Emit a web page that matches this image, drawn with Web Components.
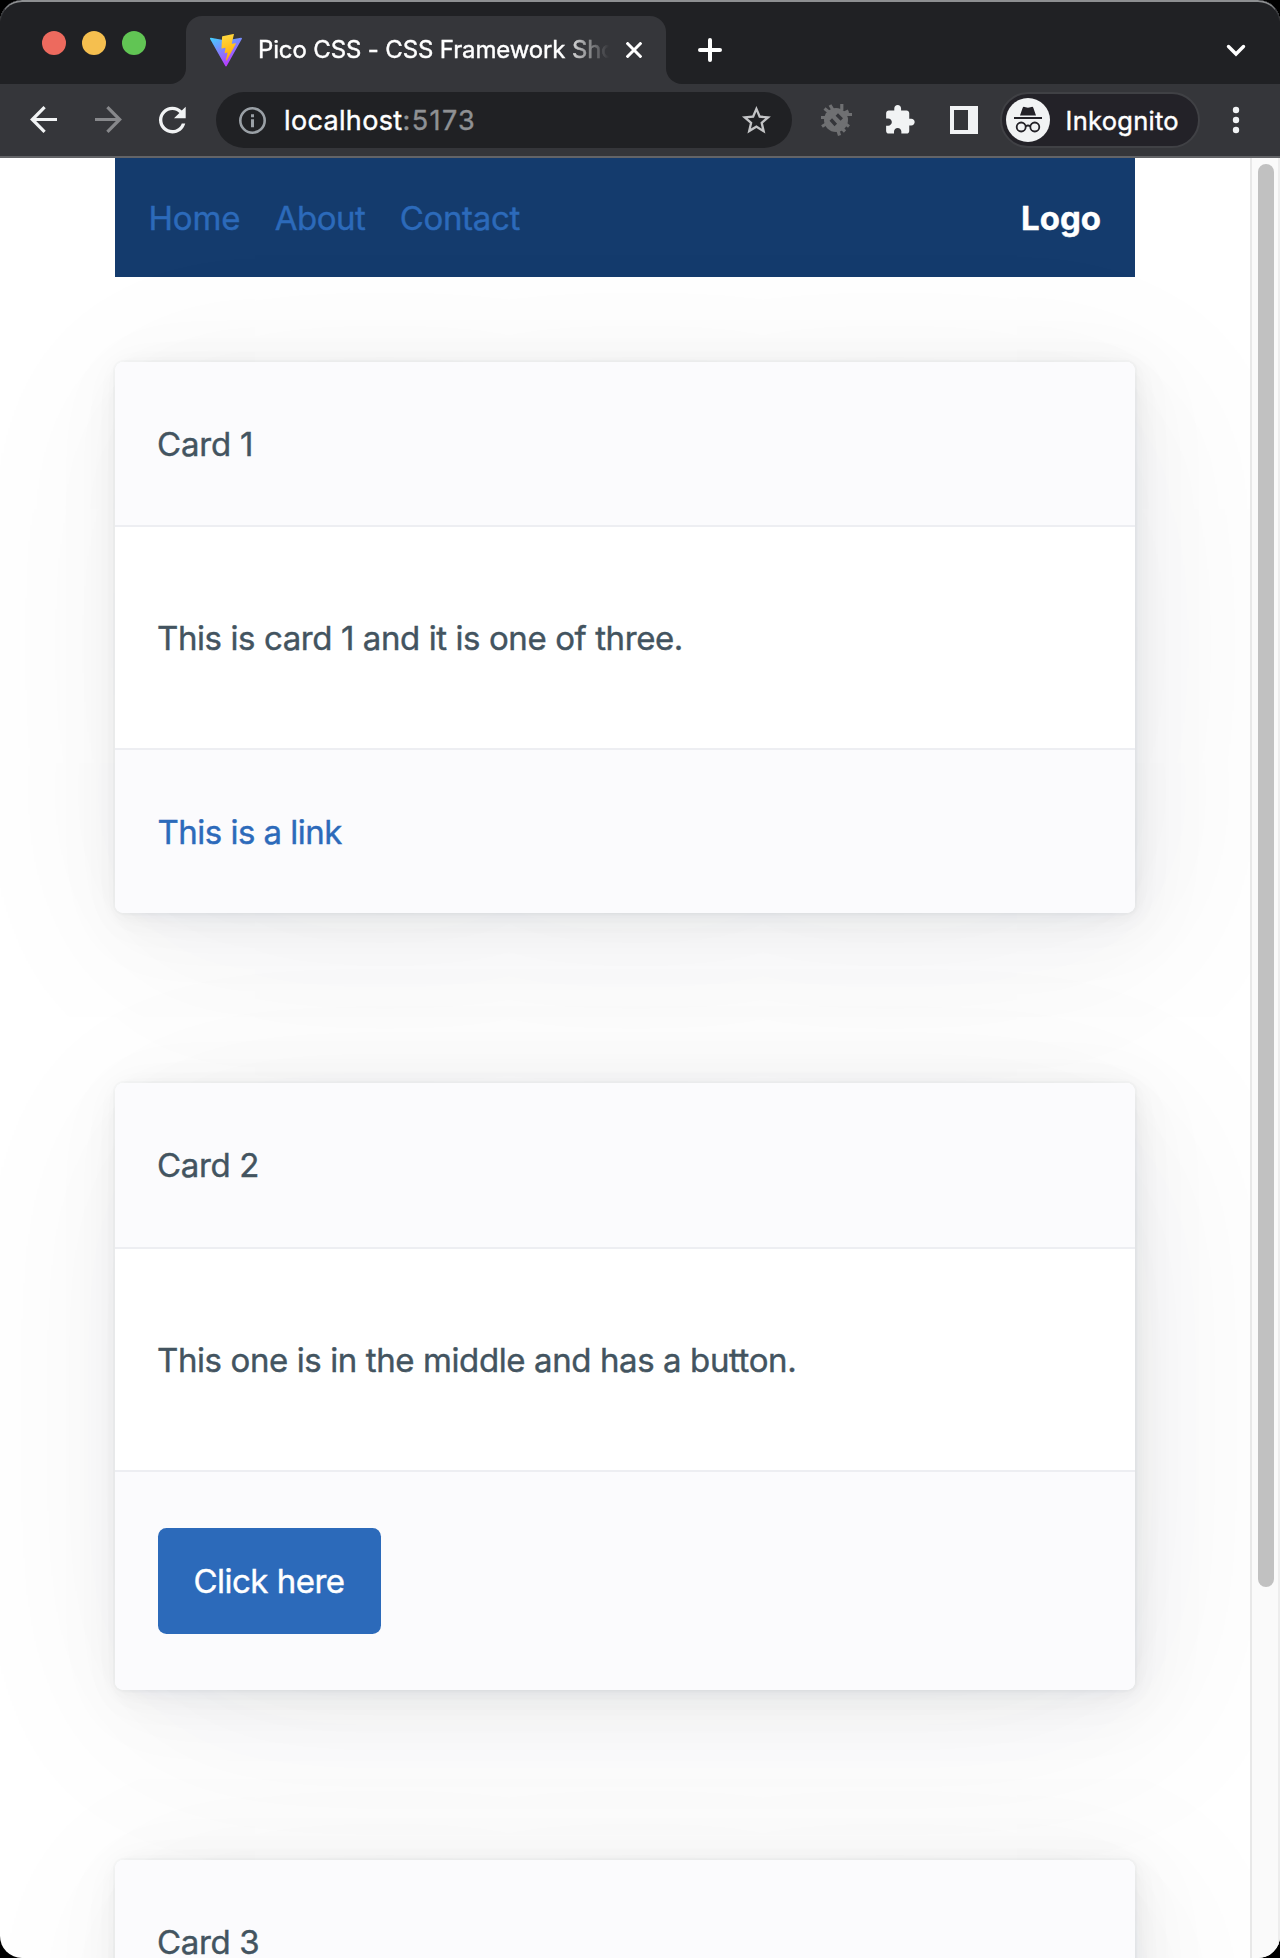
<!DOCTYPE html>
<html lang="de">
<head>
<meta charset="utf-8">
<title>Pico CSS - CSS Framework Showcase</title>
<style>
html, body { margin: 0; height: 100%; background: #000; overflow: hidden; }
body { font-family: Inter, "Liberation Sans", sans-serif; font-weight: 400; -webkit-text-stroke: .4px; }
</style>
</head>
<body>
<browser-window>
  <tab-strip slot="chrome"><browser-tab>Pico CSS - CSS Framework Showcase</browser-tab></tab-strip>
  <tool-bar slot="chrome"><address-field slot="address" port=":5173">localhost</address-field><profile-pill slot="profile">Inkognito</profile-pill></tool-bar>
  <nav-bar>
    <nav-link style="letter-spacing:-.15px">Home</nav-link>
    <nav-link style="letter-spacing:-.55px">About</nav-link>
    <nav-link style="letter-spacing:-.33px">Contact</nav-link>
    <strong slot="brand">Logo</strong>
  </nav-bar>
  <pico-card>
    <span slot="header" style="letter-spacing:-.2px">Card 1</span>
    <span style="letter-spacing:-.41px">This is card 1 and it is one of three.</span>
    <text-link slot="footer">This is a link</text-link>
  </pico-card>
  <pico-card>
    <span slot="header" style="letter-spacing:-.35px">Card 2</span>
    <span style="letter-spacing:-.4px">This one is in the middle and has a button.</span>
    <pico-button slot="footer">Click here</pico-button>
  </pico-card>
  <pico-card>
    <span slot="header" style="letter-spacing:-.35px">Card 3</span>
  </pico-card>
</browser-window>

<script>
const define = (name, html) => customElements.define(name, class extends HTMLElement {
  constructor() {
    super();
    this.attachShadow({ mode: 'open' }).innerHTML = html;
  }
  connectedCallback() {
    const port = this.shadowRoot.querySelector('.port');
    if (port) port.textContent = this.getAttribute('port') || '';
  }
});

define('browser-window', `
<style>
:host { display: flex; flex-direction: column; width: 1280px; height: 1958px; box-sizing: border-box; overflow: hidden; border-radius: 22px; background: #fff; position: relative; }
:host::after { content: ""; position: absolute; inset: 0 0 auto 0; height: 60px; box-sizing: border-box; border: 1px solid #55585b; border-top: 2px solid #8d8f91; border-bottom: 0; border-radius: 22px 22px 0 0; -webkit-mask: linear-gradient(#000 4px, transparent 22px); mask: linear-gradient(#000 4px, transparent 22px); pointer-events: none; }
.view { display: flex; flex: 1; min-height: 0; }
main { width: 1250px; overflow: hidden; }
.content { width: 1020px; margin: 0 auto; display: flex; flex-direction: column; }
.scroll { width: 30px; box-sizing: border-box; border-left: 2px solid #e8e8e8; border-right: 2px solid #ededed; background: #fafafa; padding: 6px 0 0 6px; }
.thumb { width: 16px; height: 1423px; border-radius: 8px; background: #c1c1c1; }
</style>
<slot name="chrome"></slot>
<div class="view"><main><div class="content"><slot></slot></div></main><div class="scroll"><div class="thumb"></div></div></div>`);

define('tab-strip', `
<style>
:host { display: flex; height: 84px; background: #35363a; flex: none; }
.lights { width: 186px; box-sizing: border-box; padding: 31px 0 0 42px; display: flex; gap: 16px; background: #202124; border-bottom-right-radius: 16px; }
i { width: 24px; height: 24px; border-radius: 50%; }
.rest { flex: 1; display: flex; justify-content: space-between; background: #202124; border-bottom-left-radius: 16px; }
svg { display: block; fill: none; stroke: #fff; }
</style>
<div class="lights"><i style="background:#ed6a5e"></i><i style="background:#f5bf4f"></i><i style="background:#61c554"></i></div>
<slot></slot>
<div class="rest">
  <svg width="60" height="84" stroke-width="4" stroke-linecap="round"><path d="M34 50H54M44 40V60"/></svg>
  <svg width="60" height="84" stroke-width="3.400" stroke-linecap="round"><path d="M8.500 46.500L16 54L23.500 46.500"/></svg>
</div>`);

define('browser-tab', `
<style>
:host { display: block; width: 480px; height: 84px; background: #202124; }
.tab { height: 68px; border-top: 16px solid #202124; }
.shape { height: 68px; display: flex; align-items: center; box-sizing: border-box; padding: 0 24px; background: #35363a; border-radius: 16px 16px 0 0; }
.title { margin-left: 16px; width: 351px; font-size: 24px; line-height: 34px; letter-spacing: -.14px; color: #fff; white-space: nowrap; overflow: hidden; -webkit-mask: linear-gradient(90deg, #000 305px, transparent 351px); mask: linear-gradient(90deg, #000 305px, transparent 351px); }
svg { display: block; flex: none; }
.x { margin-left: 17px; }
</style>
<div class="tab"><div class="shape">
  <svg width="32" height="33" viewBox="0 0 32 33">
    <defs>
      <linearGradient id="v" x1="0" y1="0" x2=".55" y2="1"><stop offset="0" stop-color="#41d1ff"/><stop offset="1" stop-color="#bd34fe"/></linearGradient>
      <linearGradient id="b" x1=".4" y1="0" x2=".6" y2="1"><stop offset="0" stop-color="#ffd83f"/><stop offset="1" stop-color="#ffa800"/></linearGradient>
    </defs>
    <path fill="url(#v)" d="M31.8 4.9L16.7 32.1a.8.8 0 0 1-1.4 0L.1 4.9A.8.8 0 0 1 .9 3.7L15.9 6.4L31 3.7A.8.8 0 0 1 31.8 4.9z"/>
    <path fill="url(#b)" d="M23.4 0L12.5 2.2a.4.4 0 0 0-.4.4L11.5 14.1a.4.4 0 0 0 .5.4L15 13.8a.4.4 0 0 1 .5.5L14.6 18.7a.4.4 0 0 0 .5.5L17 18.6a.4.4 0 0 1 .5.5L16 26.1c-.1.5.5.7.7.3L25.9 9.8a.4.4 0 0 0-.4-.6L22.3 9.8a.4.4 0 0 1-.5-.5L23.9.5A.4.4 0 0 0 23.4 0z"/>
  </svg>
  <div class="title"><slot></slot></div>
  <svg class="x" width="16" height="16" viewBox="0 0 16 16" stroke="#fff" stroke-width="3"><path d="M.6.6L15.4 15.4M15.4.6L.6 15.4"/></svg>
</div></div>`);

define('tool-bar', `
<style>
:host { display: flex; align-items: center; height: 74px; box-sizing: border-box; border-bottom: 2px solid #636467; background: #35363a; flex: none; }
svg { display: block; flex: none; fill: none; }
</style>
<svg width="216" height="72" stroke-width="3.2">
  <path stroke="#f1f3f4" d="M57 35.5H33M44.6 23.2L32.3 35.5L44.6 47.8"/>
  <path stroke="#87888b" d="M95 35.5H119M107.4 23.2L119.7 35.5L107.4 47.8"/>
  <path fill="#f1f3f4" transform="translate(152.3 16) scale(1.67)" d="M17.65 6.35C16.2 4.9 14.21 4 12 4c-4.42 0-7.99 3.58-7.99 8s3.57 8 7.99 8c3.73 0 6.84-2.55 7.73-6h-2.08c-.82 2.33-3.04 4-5.65 4-3.31 0-6-2.69-6-6s2.69-6 6-6c1.66 0 3.14.69 4.22 1.78L13 11h7V4l-2.35 2.35z"/>
</svg>
<slot name="address"></slot>
<svg width="208" height="72" viewBox="792 84 208 72">
  <g fill="#6f7072" stroke="#6f7072" stroke-width="3.200">
    <circle cx="836" cy="120" r="12" stroke="none"/>
    <path d="M824.500 108.500l5 4M830 105l3 5M841.800 104v6M848.500 111l-4 2M852 114.500h-6M849 126.500l-4-3M845 131.500l-4-4M839.500 135.500l-1.500-5M821 117.500h5M822 126.500l4-2.500"/>
    <path stroke="#35363a" stroke-width="3.400" d="M830.800 119.500l5 5.500M836.800 114.500l5 5"/>
  </g>
  <path fill="#f1f3f4" transform="translate(883.4 103.7) scale(1.36)" d="M20.5 11H19V7c0-1.1-.9-2-2-2h-4V3.5C13 2.12 11.88 1 10.5 1S8 2.12 8 3.5V5H4c-1.1 0-1.99.9-1.99 2v3.8H3.5c1.49 0 2.7 1.21 2.7 2.7s-1.21 2.7-2.7 2.7H2V20c0 1.1.9 2 2 2h3.8v-1.5c0-1.49 1.21-2.7 2.7-2.7 1.49 0 2.7 1.21 2.7 2.7V22H17c1.1 0 2-.9 2-2v-4h1.5c1.38 0 2.5-1.12 2.5-2.5S21.88 11 20.5 11z"/>
  <path fill="#f1f3f4" fill-rule="evenodd" d="M950 106h28v28h-28zM954 110v20h14v-20z"/>
</svg>
<slot name="profile"></slot>
<svg width="80" height="72" viewBox="1200 84 80 72" fill="none"><g fill="#f1f3f4"><circle cx="1236" cy="110" r="3.2"/><circle cx="1236" cy="120" r="3.200"/><circle cx="1236" cy="130" r="3.200"/></g></svg>`);

define('address-field', `
<style>
:host { display: flex; align-items: center; width: 576px; height: 56px; box-sizing: border-box; padding: 0 18.6px 0 23px; border-radius: 28px; background: #202124; font-size: 27px; line-height: 36px; color: #fff; flex: none; }
svg { display: block; flex: none; }
.text { margin-left: 18px; padding-top: 1px; flex: 1; letter-spacing: .35px; white-space: nowrap; }
.port { color: #8f9194; letter-spacing: 1.400px; }
</style>
<svg width="27" height="27" viewBox="0 0 27 27"><circle cx="13.500" cy="13.500" r="12.200" fill="none" stroke="#9aa0a6" stroke-width="2.600"/><path fill="#9aa0a6" d="M12 7.200h3v3h-3zM12 12.200h3v8h-3z"/></svg>
<div class="text"><slot></slot><span class="port"></span></div>
<svg width="34.8" height="34.8" viewBox="0 0 24 24"><path fill="#c3c4c6" d="M22 9.24l-7.19-.62L12 2 9.19 8.63 2 9.24l5.46 4.73L5.82 21 12 17.27 18.18 21l-1.63-7.03L22 9.24zM12 15.4l-3.76 2.27 1-4.28-3.32-2.88 4.38-.38L12 6.1l1.71 4.04 4.38.38-3.32 2.88 1 4.28L12 15.4z"/></svg>`);

define('profile-pill', `
<style>
:host { display: flex; align-items: center; width: 200px; height: 56px; box-sizing: border-box; padding-left: 4px; border: 2px solid #404145; border-radius: 28px; background: #232228; color: #fff; font-size: 25.500px; letter-spacing: .28px; line-height: 34px; flex: none; }
svg { display: block; flex: none; margin-right: 15.500px; }
.name { padding-top: 1px; }
</style>
<svg width="44" height="44" viewBox="1006 98 44 44">
  <circle cx="1028" cy="120" r="22" fill="#f1f3f4"/>
  <path fill="#232228" d="M1020 115.500l2.600-7.600q.5-1.400 1.900-1l3.500.8 3.500-.8q1.400-.4 1.900 1l2.600 7.600zM1014 117h28v2h-28z"/>
  <g fill="none" stroke="#232228" stroke-width="1.800"><circle cx="1021.200" cy="127" r="4.500"/><circle cx="1034.800" cy="127" r="4.500"/><path d="M1025.600 126.200q2.400-1.400 4.800 0"/></g>
</svg><div class="name"><slot></slot></div>`);

define('nav-bar', `
<style>
:host { display: flex; align-items: center; justify-content: space-between; height: 118.700px; box-sizing: border-box; padding: 3px 34px 0 33.500px; background: #143b6d; color: #fff; font-size: 33px; line-height: 51px; }
.links { display: flex; gap: 34.500px; }
::slotted(strong) { font-weight: 700; letter-spacing: 0; }
</style>
<div class="links"><slot></slot></div><slot name="brand"></slot>`);

define('nav-link', `<style>:host { display: block; color: #2c6aba; }</style><slot></slot>`);
define('text-link', `<style>:host { display: block; box-sizing: border-box; height: 51px; padding-top: 1px; color: #2c6aba; letter-spacing: -.52px; }</style><slot></slot>`);
define('pico-button', `<style>:host { display: flex; align-items: center; justify-content: center; width: 223px; height: 106px; box-sizing: border-box; padding-top: 1px; border-radius: 8.500px; background: #2c6aba; color: #fff; letter-spacing: -.5px; }</style><slot></slot>`);

define('pico-card', `
<style>
:host { display: block; margin-top: 84.900px; border-radius: 8.500px; background: #fff; color: #435460; font-size: 33px; line-height: 51px;
  box-shadow: .493px .986px 5.916px rgba(27,40,50,.017), 1.139px 2.278px 13.668px rgba(27,40,50,.024), 2.125px 4.250px 25.500px rgba(27,40,50,.03), 3.825px 7.650px 45.900px rgba(27,40,50,.036), 7.089px 14.178px 85.068px rgba(27,40,50,.043), 17px 34px 204px rgba(27,40,50,.06), 0 0 0 2.125px rgba(27,40,50,.015); }
:host(:not(:first-of-type)) { margin-top: 170px; }
header, footer { background: #fbfbfd; }
header { height: 50.500px; padding: 57px 42px 56px; border-bottom: 2px solid #edeef2; border-radius: 8.500px 8.500px 0 0; }
.body { padding: 86px 42px 84px; }
footer { padding: 56px 42.500px; border-top: 2px solid #edeef2; border-radius: 0 0 8.500px 8.500px; }
</style>
<header><slot name="header"></slot></header><div class="body"><slot></slot></div><footer><slot name="footer"></slot></footer>`);
</script>
</body>
</html>
